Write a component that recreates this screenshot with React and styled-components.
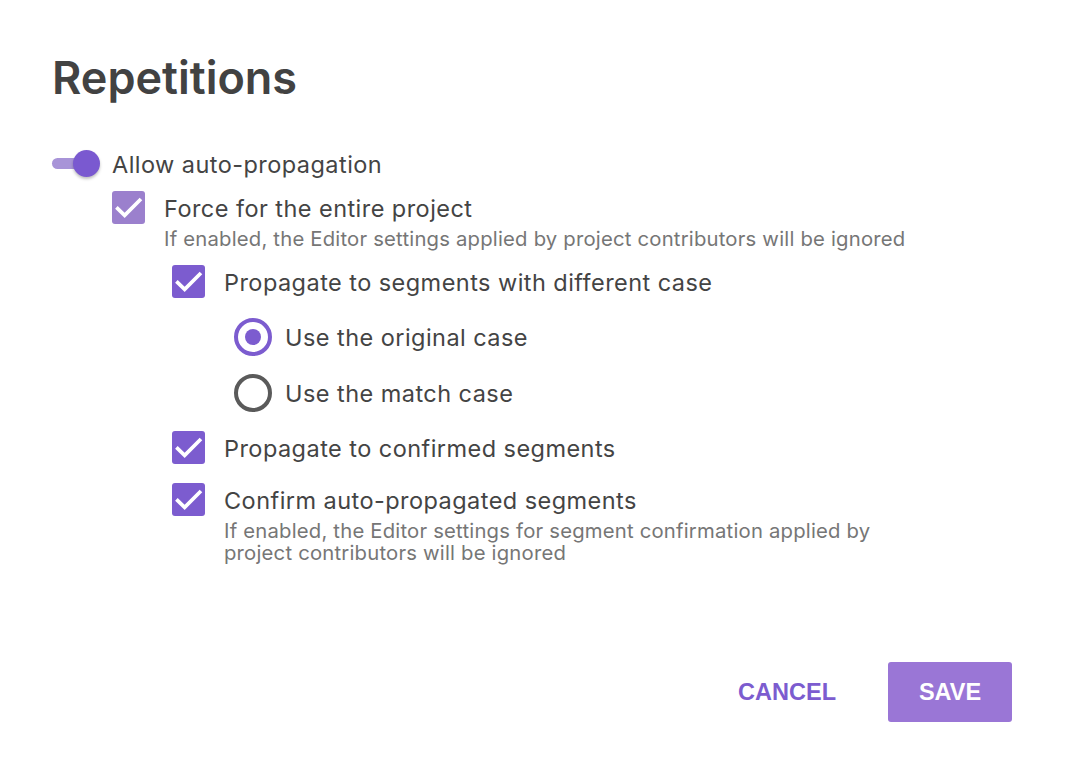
import React, { useState } from 'react';
import styled, { createGlobalStyle } from 'styled-components';

const GlobalStyle = createGlobalStyle`
  html, body {
    margin: 0;
    padding: 0;
    background: #fff;
  }
  body {
    font-family: Inter, "Noto Sans", sans-serif;
    color: #444;
  }
`;

const Dialog = styled.div`
  width: 1065px;
  height: 776px;
  box-sizing: border-box;
  padding: 48px 53px 54px 52px;
  display: flex;
  flex-direction: column;
`;

const Title = styled.h1`
  margin: 0;
  font-size: 45px;
  font-weight: 600;
  line-height: 60px;
  color: #424242;
`;

const Options = styled.div`
  margin-top: 39px;
  display: flex;
  flex-direction: column;
  flex: 1;
`;

const Row = styled.div`
  display: flex;
  align-items: flex-start;
  gap: ${(p) => p.gap || 18}px;
  margin-left: ${(p) => p.indent || 0}px;
  margin-top: ${(p) => p.top || 0}px;
`;

const Label = styled.div`
  display: flex;
  flex-direction: column;
`;

const Main = styled.span`
  font-size: 23.5px;
  line-height: 33px;
  letter-spacing: 0.45px;
  color: #444;
  white-space: nowrap;
  padding-top: 1px;
`;

const Hint = styled.span`
  margin-top: 3px;
  font-size: 20.3px;
  line-height: 22px;
  letter-spacing: 0.2px;
  color: #767676;
  max-width: ${(p) => p.max || 800}px;
`;

const Track = styled.div`
  position: relative;
  width: 44px;
  height: 11px;
  margin-top: 11px;
  border-radius: 6px;
  background: #a894d8;
  flex-shrink: 0;
`;

const Thumb = styled.div`
  position: absolute;
  left: 21px;
  top: -8px;
  width: 27px;
  height: 27px;
  border-radius: 50%;
  background: #7a59d0;
  box-shadow: 0 2px 3px rgba(0, 0, 0, 0.25);
`;

const Box = styled.div`
  width: 33px;
  height: 33px;
  border-radius: 3px;
  background: ${(p) => (p.faded ? '#9b80cd' : '#7c5ccf')};
  display: flex;
  flex-shrink: 0;
`;

const Radio = styled.div`
  width: 38px;
  height: 38px;
  box-sizing: border-box;
  border-radius: 50%;
  border: 4px solid ${(p) => (p.checked ? '#7c5ccf' : '#5a5a5a')};
  display: flex;
  align-items: center;
  justify-content: center;
  flex-shrink: 0;
  &::after {
    content: '';
    width: 16px;
    height: 16px;
    border-radius: 50%;
    background: #7c5ccf;
    display: ${(p) => (p.checked ? 'block' : 'none')};
  }
`;

const RadioRow = styled(Row)`
  align-items: center;
`;

const Footer = styled.div`
  display: flex;
  justify-content: flex-end;
  align-items: center;
  gap: 52px;
`;

const TextButton = styled.button`
  border: none;
  background: none;
  padding: 0;
  font-family: "Liberation Sans", Arial, sans-serif;
  font-weight: 700;
  font-size: 23.5px;
  color: #7c5ccf;
  cursor: pointer;
`;

const SaveButton = styled.button`
  width: 124px;
  height: 60px;
  border: none;
  border-radius: 3px;
  background: #9a76d6;
  color: #fff;
  font-family: "Liberation Sans", Arial, sans-serif;
  font-weight: 700;
  font-size: 23.5px;
  cursor: pointer;
`;

const Check = () => (
  <svg width="33" height="33" viewBox="0 0 18 18">
    <path d="M2.4 8.9 L6.9 13.3 L15.8 4.4" fill="none" stroke="#fff" strokeWidth="2" />
  </svg>
);

const CheckItem = ({ indent, top, faded, label, hint, hintMax }) => (
  <Row indent={indent} top={top} gap={19}>
    <Box faded={faded}>
      <Check />
    </Box>
    <Label>
      <Main>{label}</Main>
      {hint && <Hint max={hintMax}>{hint}</Hint>}
    </Label>
  </Row>
);

const RadioItem = ({ checked, label, top, onClick }) => (
  <RadioRow indent={182} top={top} gap={13} onClick={onClick}>
    <Radio checked={checked} />
    <Main>{label}</Main>
  </RadioRow>
);

export default function App() {
  const [caseMode, setCaseMode] = useState('original');

  return (
    <>
      <GlobalStyle />
      <Dialog>
        <Title>Repetitions</Title>
        <Options>
          <Row gap={16}>
            <Track>
              <Thumb />
            </Track>
            <Main>Allow auto-propagation</Main>
          </Row>
          <CheckItem
            indent={60}
            top={10}
            faded
            label="Force for the entire project"
            hint="If enabled, the Editor settings applied by project contributors will be ignored"
          />
          <CheckItem indent={120} top={15} label="Propagate to segments with different case" />
          <RadioItem
            top={19}
            checked={caseMode === 'original'}
            label="Use the original case"
            onClick={() => setCaseMode('original')}
          />
          <RadioItem
            top={18}
            checked={caseMode === 'match'}
            label="Use the match case"
            onClick={() => setCaseMode('match')}
          />
          <CheckItem indent={120} top={19} label="Propagate to confirmed segments" />
          <CheckItem
            indent={120}
            top={18}
            label="Confirm auto-propagated segments"
            hint="If enabled, the Editor settings for segment confirmation applied by project contributors will be ignored"
            hintMax={680}
          />
        </Options>
        <Footer>
          <TextButton>CANCEL</TextButton>
          <SaveButton>SAVE</SaveButton>
        </Footer>
      </Dialog>
    </>
  );
}
